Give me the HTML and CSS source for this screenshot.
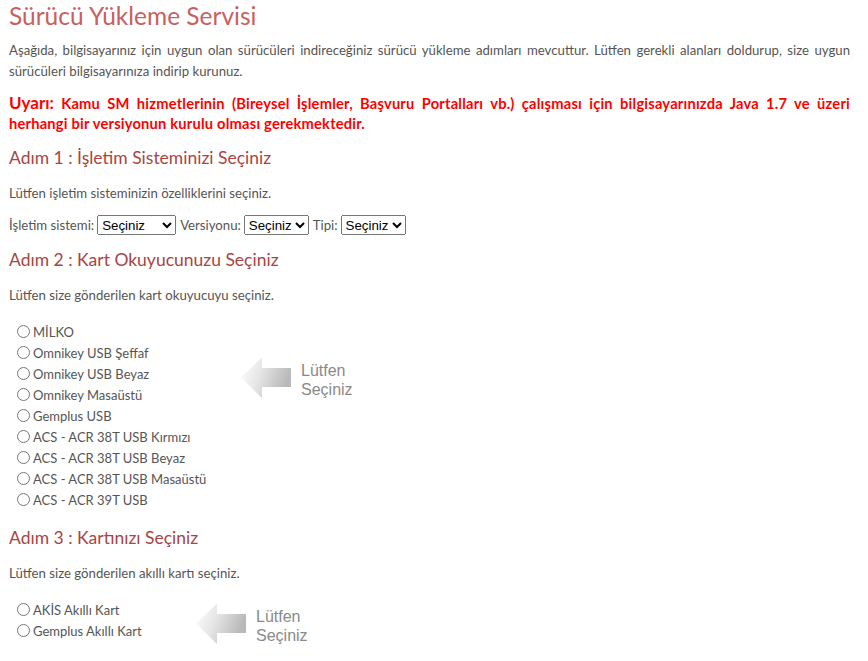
FILE: index.html
```html
<!DOCTYPE html>
<html lang="tr">
<head>
<meta charset="utf-8">
<title>Sürücü Yükleme Servisi</title>
<link rel="stylesheet" href="styles.css">
</head>
<body>
<div class="page">
  <h1 class="title">Sürücü Yükleme Servisi</h1>
  <p class="text">Aşağıda, bilgisayarınız için uygun olan sürücüleri indireceğiniz sürücü yükleme adımları mevcuttur. Lütfen gerekli alanları doldurup, size uygun sürücüleri bilgisayarınıza indirip kurunuz.</p>
  <p class="warning"><span class="warning-label">Uyarı:</span> Kamu SM hizmetlerinin (Bireysel İşlemler, Başvuru Portalları vb.) çalışması için bilgisayarınızda Java 1.7 ve üzeri herhangi bir versiyonun kurulu olması gerekmektedir.</p>

  <h2 class="step">Adım 1 : İşletim Sisteminizi Seçiniz</h2>
  <p class="text">Lütfen işletim sisteminizin özelliklerini seçiniz.</p>
  <div class="os-row">
    <label>İşletim sistemi:</label>
    <select class="sel sel-os"><option>Seçiniz</option></select>
    <label>Versiyonu:</label>
    <select class="sel"><option>Seçiniz</option></select>
    <label>Tipi:</label>
    <select class="sel"><option>Seçiniz</option></select>
  </div>

  <h2 class="step step-after-row">Adım 2 : Kart Okuyucunuzu Seçiniz</h2>
  <p class="text">Lütfen size gönderilen kart okuyucuyu seçiniz.</p>
  <div class="choice">
    <div class="radios radios-reader">
      <label class="radio"><input type="radio" name="reader">MİLKO</label>
      <label class="radio"><input type="radio" name="reader">Omnikey USB Şeffaf</label>
      <label class="radio"><input type="radio" name="reader">Omnikey USB Beyaz</label>
      <label class="radio"><input type="radio" name="reader">Omnikey Masaüstü</label>
      <label class="radio"><input type="radio" name="reader">Gemplus USB</label>
      <label class="radio"><input type="radio" name="reader">ACS - ACR 38T USB Kırmızı</label>
      <label class="radio"><input type="radio" name="reader">ACS - ACR 38T USB Beyaz</label>
      <label class="radio"><input type="radio" name="reader">ACS - ACR 38T USB Masaüstü</label>
      <label class="radio"><input type="radio" name="reader">ACS - ACR 39T USB</label>
    </div>
    <div class="hint hint-reader">
      <svg class="arrow" width="52" height="42" viewBox="0 0 52 42">
        <defs>
          <linearGradient id="ag1" x1="0" y1="0" x2="1" y2="0.3">
            <stop offset="0" stop-color="#ffffff"/>
            <stop offset="0.45" stop-color="#e6e6e6"/>
            <stop offset="1" stop-color="#b9b9b9"/>
          </linearGradient>
        </defs>
        <polygon points="1,20.5 22,0.5 22,11 51,11 51,30 22,30 22,41" fill="url(#ag1)"/>
      </svg>
      <div class="hint-text">Lütfen<br>Seçiniz</div>
    </div>
  </div>

  <h2 class="step">Adım 3 : Kartınızı Seçiniz</h2>
  <p class="text">Lütfen size gönderilen akıllı kartı seçiniz.</p>
  <div class="choice choice-card">
    <div class="radios radios-card">
      <label class="radio"><input type="radio" name="card">AKİS Akıllı Kart</label>
      <label class="radio"><input type="radio" name="card">Gemplus Akıllı Kart</label>
    </div>
    <div class="hint hint-card">
      <svg class="arrow" width="52" height="42" viewBox="0 0 52 42">
        <defs>
          <linearGradient id="ag2" x1="0" y1="0" x2="1" y2="0.3">
            <stop offset="0" stop-color="#ffffff"/>
            <stop offset="0.45" stop-color="#e6e6e6"/>
            <stop offset="1" stop-color="#b9b9b9"/>
          </linearGradient>
        </defs>
        <polygon points="1,20.5 22,0.5 22,11 51,11 51,30 22,30 22,41" fill="url(#ag2)"/>
      </svg>
      <div class="hint-text">Lütfen<br>Seçiniz</div>
    </div>
  </div>
</div>
</body>
</html>
```

FILE: styles.css
```css
html, body {
  margin: 0;
  padding: 0;
  background: #ffffff;
}

body {
  font-family: "Lato", "Noto Sans", "DejaVu Sans", sans-serif;
  color: #555555;
}

.page {
  padding: 0 18px 0 9px;
}

.title {
  margin: 0;
  padding-top: 2px;
  font-size: 24.5px;
  line-height: 28px;
  font-weight: normal;
  color: #c95f5e;
}

.text {
  margin: 0;
  font-size: 13.2px;
  line-height: 21px;
  text-align: justify;
}

.title + .text {
  margin-top: 10px;
}

.warning {
  margin: 11px 0 0;
  font-size: 14.7px;
  line-height: 20px;
  font-weight: bold;
  letter-spacing: 0.2px;
  color: #ff0000;
  text-align: justify;
}

.warning-label {
  display: inline-block;
  font-size: 17px;
  line-height: 20px;
  letter-spacing: 0;
}

.step {
  margin: 12px 0 0;
  font-size: 17.5px;
  line-height: 26px;
  font-weight: normal;
  color: #a94442;
}

.step-after-row {
  margin-top: 12px;
}

.choice + .step {
  margin-top: 15px;
}

.step + .text {
  margin-top: 12px;
}

.os-row {
  margin-top: 11px;
  display: flex;
  align-items: center;
  gap: 3px;
  font-size: 13.2px;
  height: 20px;
}

.sel {
  font-family: "Liberation Sans", Arial, sans-serif;
  font-size: 13.3px;
  color: #000;
  height: 20px;
  margin-right: 1px;
}

.sel-os {
  width: 79px;
}

.choice {
  display: flex;
  margin-top: 15px;
}

.choice-card {
  margin-top: 15px;
}

.radios {
  display: flex;
  flex-direction: column;
  padding-left: 3px;
}

.radio {
  display: flex;
  align-items: center;
  height: 21px;
  font-size: 13px;
}

.radio input {
  margin: 0 3px 0 5px;
  width: 13px;
  height: 13px;
}

.radios-reader {
  width: 228px;
}

.radios-card {
  width: 183px;
}

.hint {
  display: flex;
  align-items: center;
  gap: 9px;
}

.hint-reader {
  align-self: flex-start;
  margin-top: 36px;
}

.hint-card {
  align-self: flex-start;
  margin-top: 4px;
}

.arrow {
  display: block;
}

.hint-text {
  font-family: "Liberation Sans", Arial, sans-serif;
  font-size: 16px;
  line-height: 19px;
  color: #8a8a8a;
  margin-top: 3px;
}
```
